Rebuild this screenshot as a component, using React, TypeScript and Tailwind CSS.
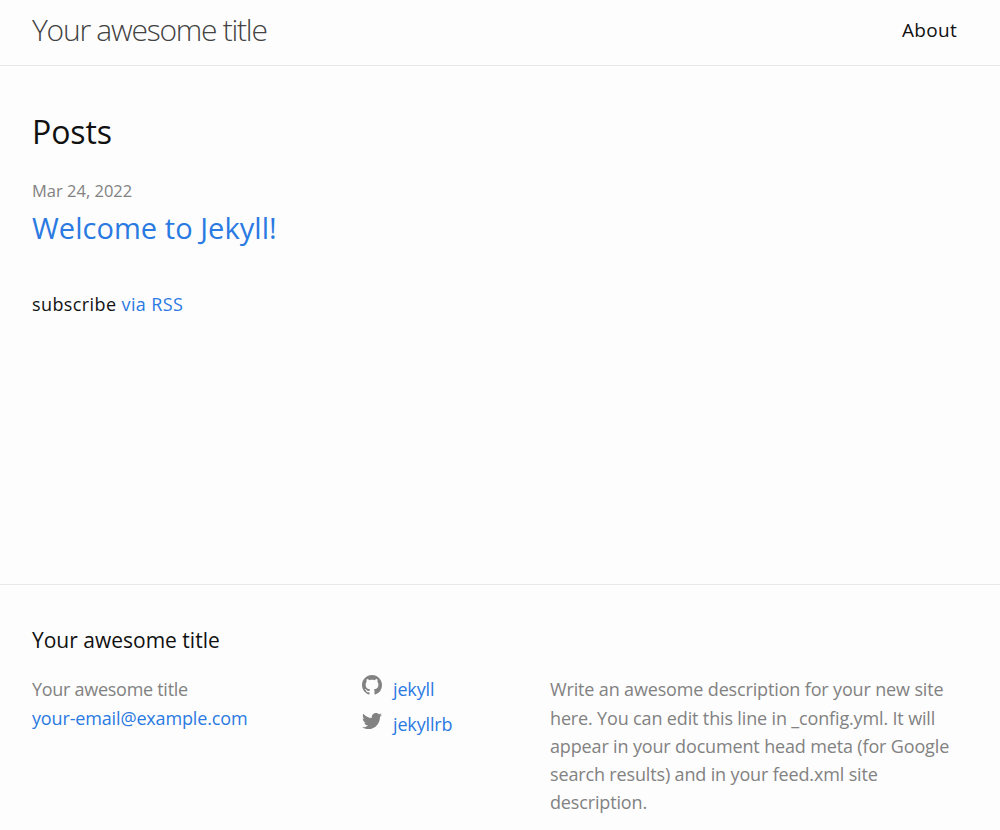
import { FaTwitter } from "react-icons/fa";

const linkClass = "text-[#2a7ae2]";

function GithubIcon() {
  return (
    <svg viewBox="0 0 16 16" className="h-5 w-5 fill-[#828282]">
      <path d="M8 0C3.58 0 0 3.58 0 8c0 3.54 2.29 6.53 5.47 7.59.4.07.55-.17.55-.38 0-.19-.01-.82-.01-1.49-2.01.37-2.53-.49-2.69-.94-.09-.23-.48-.94-.82-1.13-.28-.15-.68-.52-.01-.53.63-.01 1.08.58 1.23.82.72 1.21 1.87.87 2.33.66.07-.52.28-.87.51-1.07-1.78-.2-3.64-.89-3.64-3.95 0-.87.31-1.59.82-2.15-.08-.2-.36-1.02.08-2.12 0 0 .67-.21 2.2.82.64-.18 1.32-.27 2-.27.68 0 1.36.09 2 .27 1.53-1.04 2.2-.82 2.2-.82.44 1.1.16 1.92.08 2.12.51.56.82 1.27.82 2.15 0 3.07-1.87 3.75-3.65 3.95.29.25.54.73.54 1.48 0 1.07-.01 1.93-.01 2.2 0 .21.15.46.55.38A8.013 8.013 0 0016 8c0-4.42-3.58-8-8-8z" />
    </svg>
  );
}

export default function App() {
  return (
    <div className="flex h-[830px] flex-col overflow-hidden bg-[#fdfdfd] font-['Open_Sans',sans-serif] text-[18px] leading-[28.125px] text-[#111111]">
      {/* Header */}
      <header className="flex h-[66px] shrink-0 items-center justify-between border-b border-[#e8e8e8] px-8 pb-[4px]">
        <a className="text-[30px] font-light tracking-[-1.25px] text-[#424242]">Your awesome title</a>
        <a className="pr-[11px] text-[19px] tracking-[0.3px] text-[#111111]">About</a>
      </header>

      {/* Posts */}
      <main className="h-[518px] shrink-0 px-8 pt-[48px]">
        <h2 className="text-[32px] leading-[36px] tracking-[-0.1px]">Posts</h2>
        <div className="mt-[29px] text-[16.5px] leading-[24px] text-[#828282]">Mar 24, 2022</div>
        <a className={`mt-[7px] block text-[29px] leading-[36px] tracking-[0.05px] ${linkClass}`}>Welcome to Jekyll!</a>
        <p className="mt-[44px] tracking-[0.4px]">
          subscribe <a className={linkClass}>via RSS</a>
        </p>
      </main>

      {/* Footer */}
      <footer className="flex-1 border-t border-[#e8e8e8] px-8 pt-[40px]">
        <h2 className="text-[21px] leading-[30px]">Your awesome title</h2>
        <div className="mt-[20.4px] flex tracking-[-0.15px] text-[#828282]">
          <div className="w-[330px] shrink-0">
            <div className="tracking-[-0.28px]">Your awesome title</div>
            <a className={linkClass}>your-email@example.com</a>
          </div>
          <div className="w-[188px] shrink-0">
            <a className="flex h-[35px] items-start gap-[11px]">
              <GithubIcon />
              <span className={linkClass}>jekyll</span>
            </a>
            <a className="flex items-start gap-[11px]">
              <FaTwitter className="mt-[1px] h-5 w-5 text-[#828282]" />
              <span className={linkClass}>jekyllrb</span>
            </a>
          </div>
          <p className="w-[410px]">
            Write an awesome description for your new site here. You can edit this line in _config.yml. It will appear in your document head meta (for Google search results) and in your feed.xml site description.
          </p>
        </div>
      </footer>
    </div>
  );
}
